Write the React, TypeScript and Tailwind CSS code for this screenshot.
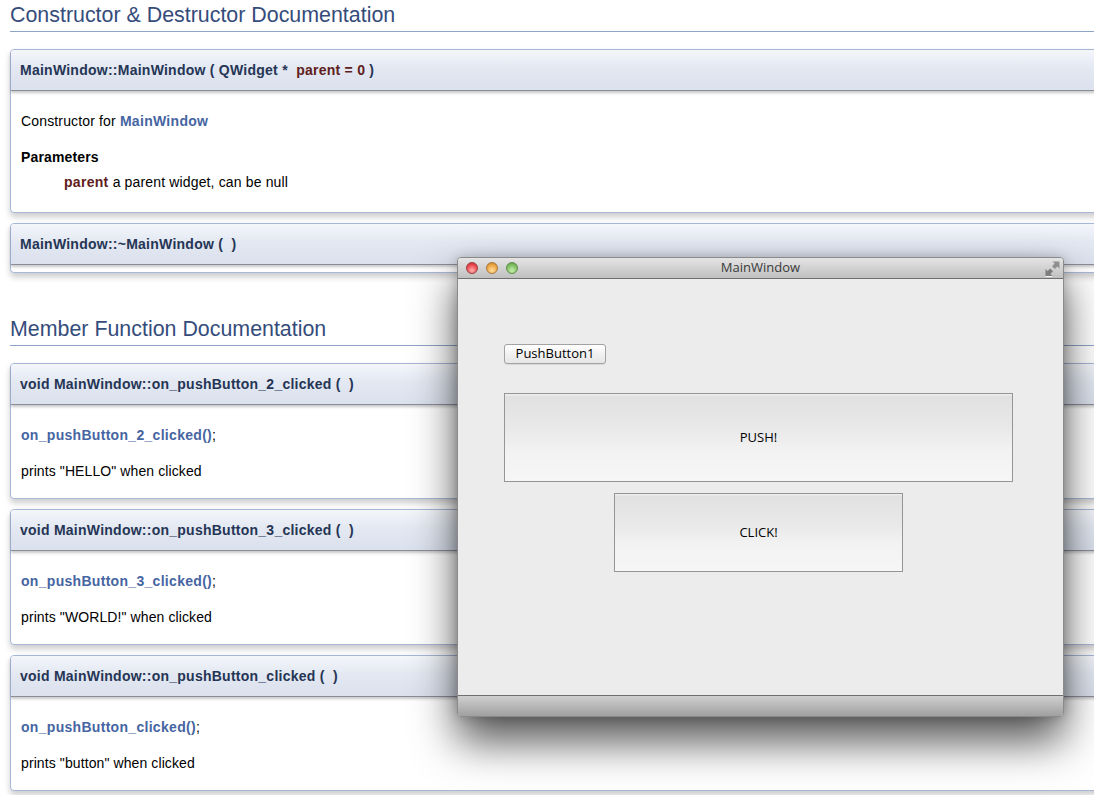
const docFont = "font-['Liberation_Sans',Arial,sans-serif]";
const macFont = "font-['Open_Sans','Noto_Sans',sans-serif]";

function SectionTitle({ children, className }: { children: React.ReactNode; className: string }) {
  return (
    <h2 className={`ml-2.5 h-[32px] border-b border-[#8ea3c8] text-[21.4px] leading-[31px] font-normal text-[#354c7b] ${className}`}>
      {children}
    </h2>
  );
}

function MemberCard({
  title,
  children,
  bodyClass,
  className,
}: {
  title: React.ReactNode;
  children?: React.ReactNode;
  bodyClass: string;
  className: string;
}) {
  return (
    <section
      className={`ml-2.5 w-[1100px] rounded-[4px] border border-[#a8b8d9] bg-white shadow-[0_4px_6px_rgba(0,0,0,0.2)] ${bodyClass} ${className}`}
    >
      <div className="flex h-[41px] items-center rounded-t-[3px] border-b border-b-[#8a8e98] bg-[linear-gradient(#f4f6fa,#e3e8f2_45%,#dbe1ed)] pl-[9px] text-[14px] font-bold tracking-[0.25px] text-[#253555] shadow-[0_2px_3px_rgba(0,0,0,0.22)]">
        {title}
      </div>
      {children}
    </section>
  );
}

function Name({ children }: { children: React.ReactNode }) {
  return <span className="font-bold tracking-[0.3px] text-[#602020]">{children}</span>;
}

function Ref({ children }: { children: React.ReactNode }) {
  return <span className="font-bold tracking-[0.3px] text-[#4665a2]">{children}</span>;
}

function SlotBody({ slot, text }: { slot: string; text: string }) {
  return (
    <div className="pl-[10px] text-[14px] leading-[18px] tracking-[0.1px] text-black">
      <p className="pt-[21px]">
        <Ref>{slot}()</Ref>;
      </p>
      <p className="pt-[18px]">{text}</p>
    </div>
  );
}

function Lights() {
  const lights = [
    "bg-[radial-gradient(circle_at_50%_75%,#ffb0b0,#e8434a_65%,#b92a30)] border-[#9c3a3e]",
    "bg-[radial-gradient(circle_at_50%_75%,#ffdf9e,#eda13d_65%,#b97c26)] border-[#a57a3c]",
    "bg-[radial-gradient(circle_at_50%_75%,#c8eeae,#79bb5e_65%,#58913f)] border-[#5f8f4b]",
  ];
  return (
    <div className="flex gap-2">
      {lights.map((l) => (
        <span key={l} className={`h-3 w-3 rounded-full border ${l}`} />
      ))}
    </div>
  );
}

function ResizeIcon() {
  return (
    <svg width="15" height="16" viewBox="0 0 15 16" className="absolute top-[3px] right-[3px]">
      <path d="M7.5 0.5H14.5V7.5L12.4 5.4 9.8 8 7 5.2 9.6 2.6Z" fill="#8f8f8f" />
      <path d="M0.5 8V15H7.5L5.4 12.9 8 10.3 5.2 7.5 2.6 10.1Z" fill="#7d7d7d" />
      <path d="M0.5 15.5H7" stroke="#f4f4f4" strokeWidth="1" />
    </svg>
  );
}

function PanelButton({ label, className }: { label: string; className: string }) {
  return (
    <div
      className={`flex items-center justify-center border border-[#959595] bg-[linear-gradient(#f0f0f0_0,#e1e1e1_3%,#e9e9e9_40%,#f2f2f2_65%,#f6f6f6)] text-[13px] text-black ${className}`}
    >
      {label}
    </div>
  );
}

export default function App() {
  return (
    <div className={`relative h-[795px] w-[1094px] overflow-hidden bg-white ${docFont}`}>
      <SectionTitle className="">Constructor &amp; Destructor Documentation</SectionTitle>

      <MemberCard
        className="mt-[17px]"
        bodyClass="h-[164px]"
        title={
          <>
            MainWindow::MainWindow (&nbsp;QWidget *&nbsp;&nbsp;<span className="text-[#602020]">parent</span>&nbsp;
            <span className="text-[#602020]">= 0</span>&nbsp;)
          </>
        }
      >
        <div className="pl-[10px] text-[14px] leading-[18px] tracking-[0.15px] text-black">
          <p className="pt-[21px]">
            Constructor for <Ref>MainWindow</Ref>
          </p>
          <p className="pt-[18px] font-bold">Parameters</p>
          <p className="pt-[7px] pl-[43px]">
            <Name>parent</Name> a parent widget, can be null
          </p>
        </div>
      </MemberCard>

      <MemberCard className="mt-[10px]" bodyClass="h-[50px]" title={<>MainWindow::~MainWindow (&nbsp;&nbsp;)</>} />

      <SectionTitle className="mt-[41px]">Member Function Documentation</SectionTitle>

      <MemberCard
        className="mt-[17px]"
        bodyClass="h-[136px]"
        title={<>void MainWindow::on_pushButton_2_clicked (&nbsp;&nbsp;)</>}
      >
        <SlotBody slot="on_pushButton_2_clicked" text={'prints "HELLO" when clicked'} />
      </MemberCard>

      <MemberCard
        className="mt-[10px]"
        bodyClass="h-[136px]"
        title={<>void MainWindow::on_pushButton_3_clicked (&nbsp;&nbsp;)</>}
      >
        <SlotBody slot="on_pushButton_3_clicked" text={'prints "WORLD!" when clicked'} />
      </MemberCard>

      <MemberCard
        className="mt-[10px]"
        bodyClass="h-[136px]"
        title={<>void MainWindow::on_pushButton_clicked (&nbsp;&nbsp;)</>}
      >
        <SlotBody slot="on_pushButton_clicked" text={'prints "button" when clicked'} />
      </MemberCard>

      {/* floating app window over the docs page */}
      <div
        className={`absolute top-[257px] left-[457px] flex h-[460px] w-[607px] flex-col rounded-[4px] border border-[#8a8a8a] bg-[#ececec] shadow-[0_24px_44px_rgba(0,0,0,0.68),0_0_12px_rgba(0,0,0,0.2)] ${macFont}`}
      >
        <div className="relative flex h-[21px] shrink-0 items-center justify-center rounded-t-[3px] border-b border-b-[#6f6f6f] bg-[linear-gradient(#e4e4e4,#c0c0c0)]">
          <div className="absolute top-[4px] left-[8px]">
            <Lights />
          </div>
          <span className="text-[13px] text-[#3a3a3a]">MainWindow</span>
          <ResizeIcon />
        </div>

        <div className="flex-1 pt-[65px] pl-[46px]">
          <div className="flex h-[20px] w-[102px] items-center justify-center rounded-[3px] border border-[#a2a2a2] bg-[linear-gradient(#ffffff,#f1f1f1_50%,#e6e6e6)] text-[13px] text-black shadow-[0_1px_0_rgba(0,0,0,0.08)]">
            PushButton1
          </div>
          <PanelButton label="PUSH!" className="mt-[29px] h-[89px] w-[509px]" />
          <PanelButton label="CLICK!" className="mt-[11px] ml-[110px] h-[79px] w-[289px]" />
        </div>

        <div className="h-[21px] shrink-0 rounded-b-[3px] border-t border-t-[#6f6f6f] bg-[linear-gradient(#cfcfcf,#a0a0a0)]" />
      </div>
    </div>
  );
}
